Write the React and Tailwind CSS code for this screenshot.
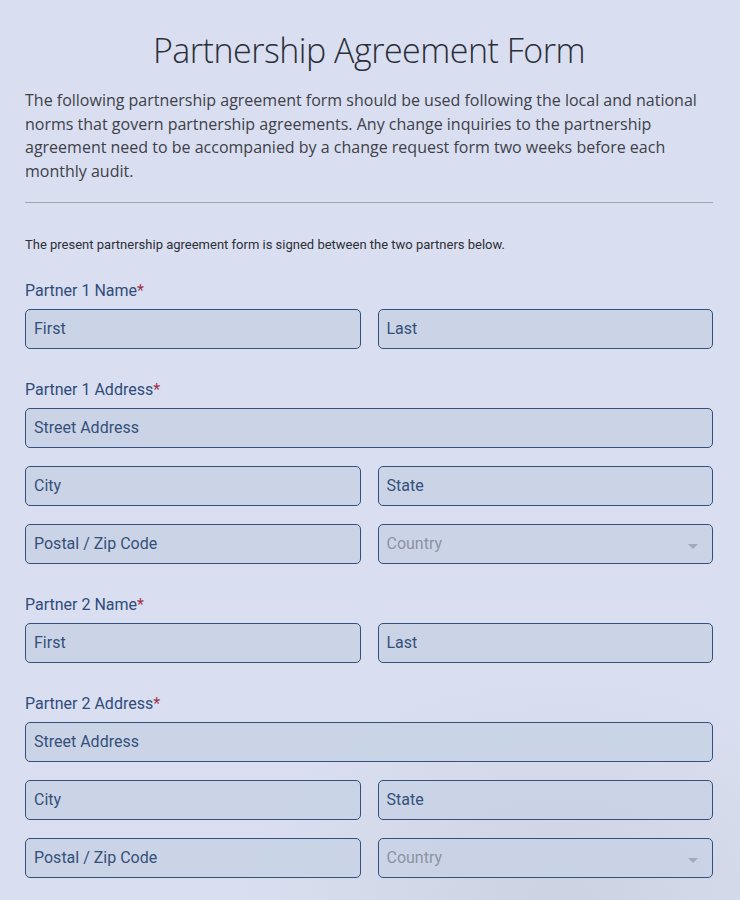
function Field({ placeholder, select }) {
  return (
    <div className="relative h-10 rounded-[5px] border border-[#34507c] bg-[#c9d3e6]/90 flex items-center px-2">
      <span className={select ? 'text-[16px] text-[#8c92a3]' : 'text-[16px] text-[#34507a]'}>{placeholder}</span>
      {select && (
        <span className="absolute right-[14px] top-[19px] w-0 h-0 border-l-[5px] border-r-[5px] border-t-[5px] border-l-transparent border-r-transparent border-t-[#a3a9b8]" />
      )}
    </div>
  )
}

function Label({ children }) {
  return (
    <div className="text-[16px] leading-5 text-[#2f4c7a] mb-2">
      {children}
      <span className="text-[#a3334a]">*</span>
    </div>
  )
}

function NameBlock({ title }) {
  return (
    <div className="mb-[31px]">
      <Label>{title}</Label>
      <div className="grid grid-cols-2 gap-[17px]">
        <Field placeholder="First" />
        <Field placeholder="Last" />
      </div>
    </div>
  )
}

function AddressBlock({ title }) {
  return (
    <div className="mb-[31px]">
      <Label>{title}</Label>
      <div className="flex flex-col gap-[18px]">
        <Field placeholder="Street Address" />
        <div className="grid grid-cols-2 gap-[17px]">
          <Field placeholder="City" />
          <Field placeholder="State" />
        </div>
        <div className="grid grid-cols-2 gap-[17px]">
          <Field placeholder="Postal / Zip Code" />
          <Field placeholder="Country" select />
        </div>
      </div>
    </div>
  )
}

export default function App() {
  return (
    <div
      className="w-[740px] h-[900px] overflow-hidden bg-[#d9def0] bg-[radial-gradient(ellipse_320px_220px_at_560px_900px,#cdd2e2_0%,#d5daeb_60%,#d9def0_100%)] pl-[25px] pr-[27px] pt-[28px]"
      style={{ fontFamily: 'Roboto, "Liberation Sans", sans-serif' }}
    >
      {/* Header */}
      <h1
        className="text-center text-[34px] font-light leading-[44px] text-[#2b2f38] tracking-[-0.5px]"
        style={{ fontFamily: '"Open Sans", sans-serif' }}
      >
        Partnership Agreement Form
      </h1>
      <p
        className="mt-[17px] text-[16px] leading-[23.7px] text-[#3e4148] whitespace-nowrap"
        style={{ fontFamily: '"Open Sans", sans-serif' }}
      >
        The following partnership agreement form should be used following the local and national
        <br />
        norms that govern partnership agreements. Any change inquiries to the partnership
        <br />
        agreement need to be accompanied by a change request form two weeks before each
        <br />
        monthly audit.
      </p>
      <div className="mt-[18px] border-t border-[#a3a6ad]" />

      <p className="mt-[32px] text-[13px] text-[#2c2f36]">
        The present partnership agreement form is signed between the two partners below.
      </p>

      <div className="mt-[27px]">
        <NameBlock title="Partner 1 Name" />
        <AddressBlock title="Partner 1 Address" />
        <NameBlock title="Partner 2 Name" />
        <AddressBlock title="Partner 2 Address" />
      </div>
    </div>
  )
}
